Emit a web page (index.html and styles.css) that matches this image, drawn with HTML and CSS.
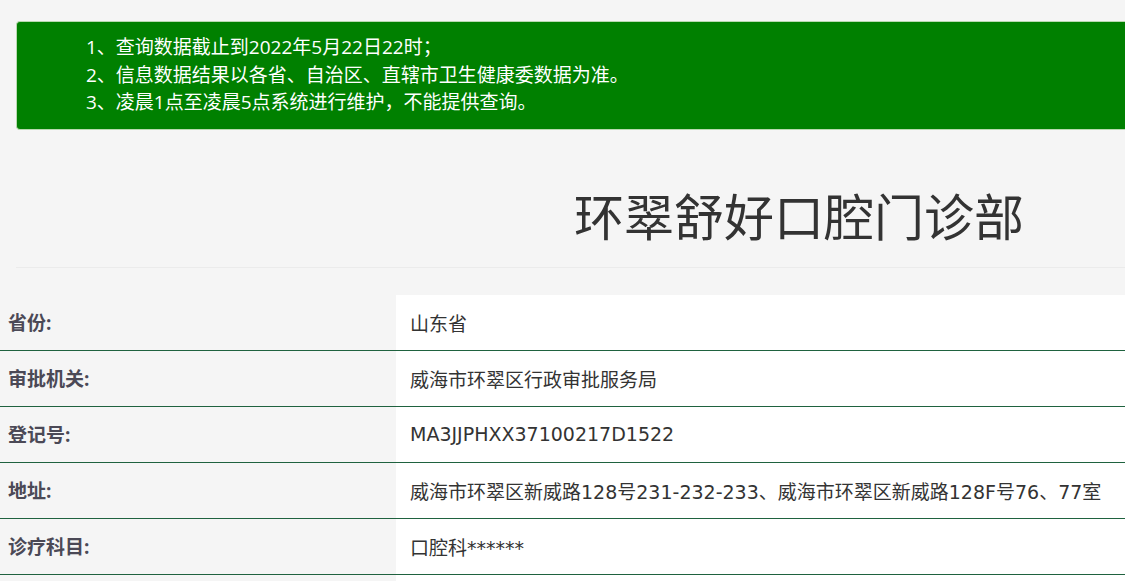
FILE: index.html
```html
<!DOCTYPE html>
<html lang="zh-CN">
<head>
<meta charset="utf-8">
<title>环翠舒好口腔门诊部</title>
<link rel="stylesheet" href="styles.css">
</head>
<body>
<div class="notice">
  <p>1、查询数据截止到2022年5月22日22时；</p>
  <p>2、信息数据结果以各省、自治区、直辖市卫生健康委数据为准。</p>
  <p>3、凌晨1点至凌晨5点系统进行维护，不能提供查询。</p>
</div>
<div class="header">
  <h1 class="title">环翠舒好口腔门诊部</h1>
</div>
<table class="info">
  <tr><td class="label">省份:</td><td class="value">山东省</td></tr>
  <tr><td class="label">审批机关:</td><td class="value">威海市环翠区行政审批服务局</td></tr>
  <tr><td class="label">登记号:</td><td class="value">MA3JJPHXX37100217D1522</td></tr>
  <tr><td class="label">地址:</td><td class="value">威海市环翠区新威路128号231-232-233、威海市环翠区新威路128F号76、77室</td></tr>
  <tr><td class="label">诊疗科目:</td><td class="value">口腔科******</td></tr>
  <tr><td class="label">&nbsp;</td><td class="value">&nbsp;</td></tr>
</table>
</body>
</html>
```
FILE: styles.css
```css
html, body {
  margin: 0;
  padding: 0;
  overflow: hidden;
}
body {
  background: #f5f5f5;
  font-family: "Open Sans", "Noto Sans CJK SC", sans-serif;
  color: #333;
}
.notice {
  margin: 21px 0 0 16px;
  padding: 12px 0 12px 69px;
  background: #008000;
  border: 1px solid #b9d9b0;
  border-right: none;
  border-radius: 4px 0 0 4px;
  color: #fff;
  font-size: 19px;
  line-height: 27.5px;
}
.notice p {
  margin: 0;
}
.header {
  margin-left: 16px;
  padding: 48px 0 16px 0;
  border-bottom: 1px solid #ebebeb;
}
.title {
  margin: 0;
  padding-left: 558px;
  font-family: "Noto Sans CJK SC", sans-serif;
  font-size: 50px;
  font-weight: normal;
  line-height: 73px;
  color: #333;
}
.info {
  margin-top: 27px;
  width: 100%;
  border-collapse: collapse;
  font-size: 19px;
}
.info td {
  height: 55px;
  padding: 0;
  border-bottom: 1px solid #1f623f;
  vertical-align: middle;
}
.info .label {
  width: 396px;
  padding-left: 8px;
  box-sizing: border-box;
  background: #f5f5f5;
  color: #4b4956;
  font-weight: bold;
}
.info .value {
  padding-left: 14px;
  background: #fff;
  color: #333;
  font-family: "DejaVu Sans", "Noto Sans CJK SC", sans-serif;
}
```
